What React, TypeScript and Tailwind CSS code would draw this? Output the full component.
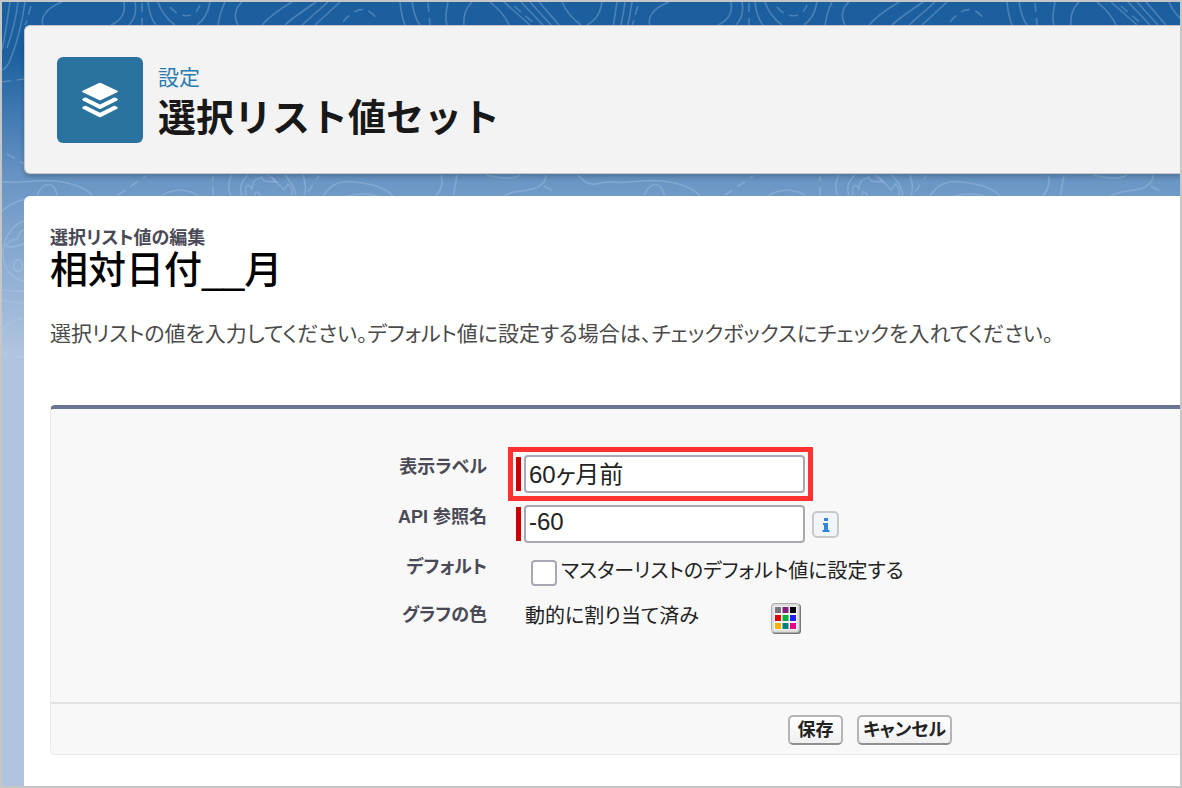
import { useState } from "react";
import type { ReactNode } from "react";

const CONTOURS = [
  // above the header
  "M10 2C7 20 6 32 2 50",
  "M18 2C16 18 12 34 7 48",
  "M25 2C22 24 18 40 11 58C8 66 5 69 2 70",
  "M62 2C46 8 40 18 43 25",
  "M124 2C126 14 120 21 111 25",
  "M135 2C137 12 134 20 129 25",
  "M148 2C149 12 151 19 156 25",
  "M158 2C162 14 168 20 175 25",
  "M210 2C208 14 204 20 197 25",
  "M225 2C220 12 219 19 218 25",
  "M242 2C234 9 234 18 238 25",
  "M292 2C280 9 268 18 262 25",
  "M316 2C300 13 291 19 285 25",
  "M328 2L302 25",
  "M340 2L315 25",
  "M400 2C401 12 402 18 405 25",
  "M412 2C414 14 416 20 420 25",
  "M448 2C446 12 445 18 447 25",
  "M472 2C466 8 463 16 464 25",
  "M490 2C500 10 506 18 509 25",
  "M504 2L530 25",
  "M521 2L543 25",
  "M530 2L551 25",
  "M539 2L559 25",
  "M562 2C567 14 574 20 581 25",
  "M602 2C600 14 596 20 587 25",
  // between the header and the content card
  "M2 182C20 184 35 179 55 181C75 183 90 190 94 198",
  "M36 198C42 182 54 178 58 198",
  "M160 197C170 188 190 188 200 197",
  "M232 175C227 184 228 190 232 198",
  "M248 175C238 184 240 192 243 198",
  "M246 196C244 183 250 183 252 190C252 183 255 179 258 179L262 177C262 183 270 181 276 182L268 175",
  "M272 177L284 190L288 184L292 188V197",
  "M255 198C254 190 260 190 260 198",
  "M285 175C292 184 296 188 296 198",
  "M303 175C307 186 305 192 304 198",
  "M322 198C330 184 340 180 355 182C375 184 390 190 394 198",
  "M345 197C356 193 370 193 380 197",
  "M441 175C444 184 440 192 434 198",
  "M457 175L453 198",
  "M486 175C500 179 514 179 520 175",
  "M546 175C546 186 535 190 520 191C510 193 505 194 502 198",
  "M578 175C585 184 592 186 600 183L610 182",
  // down the left edge
  "M2 211C9 205 17 201 26 199",
  "M28 220C14 222 4 236 3 252C2 268 12 280 28 282",
  "M25 230C18 230 20 237 16 240C12 239 8 242 6 246C12 248 20 246 25 243",
  "M18 259C12 262 12 270 18 272C24 270 24 262 18 259",
  "M2 290C10 291 18 292 26 291",
  "M2 301C10 301 18 302 26 304",
];

const DASHED = [
  "M31 6C28 14 28 20 25 25",
  "M142 3V25",
  "M170 7C180 19 195 19 200 5",
  "M343 22C355 7 368 4 379 22",
  "M428 3L430 25",
  "M514 6L536 25",
  "M2 82L24 79",
  "M7 154L26 165",
  "M118 195L146 176",
  "M213 196V176",
  "M308 192L319 176",
  "M544 186L556 193",
  "M2 330C8 322 15 319 25 318",
  "M2 350C6 358 14 359 25 356",
];

const SWATCHES = [
  "fill-[#777777]",
  "fill-[#802080]",
  "fill-black",
  "fill-[#e00000]",
  "fill-[#00b040]",
  "fill-[#2020ff]",
  "fill-[#ffb000]",
  "fill-[#008080]",
  "fill-[#e8008c]",
];

function TopoBackground() {
  return (
    <svg className="absolute inset-0 h-full w-full" aria-hidden="true">
      <defs>
        <g id="topo" fill="none" stroke="#b9d3ee" strokeOpacity="0.3" strokeWidth="1.6">
          {CONTOURS.map((d) => (
            <path key={d} d={d} />
          ))}
          {DASHED.map((d) => (
            <path key={d} d={d} strokeDasharray="9 6" />
          ))}
        </g>
      </defs>
      <g transform="translate(-2 -2)">
        <use href="#topo" />
        <use href="#topo" x="607" />
        <use href="#topo" x="1214" />
      </g>
    </svg>
  );
}

function LayersIcon() {
  return (
    <svg viewBox="0 0 36 36" className="h-9 w-9 fill-white" aria-hidden="true">
      <path d="M17 .9Q18 .4 19 .9L35.300 8.800Q36.500 9.500 35.300 10.200L19 18.100Q18 18.600 17 18.100L.7 10.200Q-.5 9.500 .7 8.800Z" />
      <path d="M1 16.500L2.600 15.700Q3.500 15.300 4.400 15.700L18 22.400L31.600 15.700Q32.500 15.300 33.400 15.700L35.200 16.600Q36.400 17.500 35.200 18.400L19 26.700Q18 27.200 17 26.700L.8 18.400Q-.4 17.500 1 16.500Z" />
      <path d="M1 24.800L2.600 24Q3.500 23.600 4.400 24L18 30.700L31.600 24Q32.500 23.600 33.400 24L35.200 24.900Q36.400 25.800 35.200 26.700L19 35Q18 35.500 17 35L.8 26.700Q-.4 25.800 1 24.800Z" />
    </svg>
  );
}

function PaletteIcon() {
  return (
    <svg viewBox="0 0 30 31" className="h-[31px] w-[30px]" aria-hidden="true">
      <rect x="1" y="1" width="29" height="30" rx="3" fill="#777" />
      <rect x=".5" y=".5" width="28" height="29" rx="3" fill="#ddd" stroke="#aaa" />
      <rect x="3" y="3" width="23" height="24" fill="#f5f5f5" />
      {SWATCHES.map((fill, i) => (
        <rect
          key={fill}
          x={4 + (i % 3) * 7.5}
          y={4 + Math.floor(i / 3) * 8}
          width="6"
          height="6"
          className={fill}
        />
      ))}
    </svg>
  );
}

function InfoIcon() {
  return (
    <svg viewBox="0 0 27 27" className="h-[27px] w-[27px]" aria-hidden="true">
      <rect x="1" y="1" width="25" height="25" rx="4" fill="#f1f4f8" stroke="#c9c9c9" strokeWidth="2" />
      <path d="M12 7h4v3h-4zM11 12h5v7h1.500v2h-7v-2h1.500v-5h-1z" fill="#2f86dc" />
    </svg>
  );
}

function Required({ highlighted = false, children }: { highlighted?: boolean; children: ReactNode }) {
  return (
    <div
      className={`flex h-[38px] gap-[3px] ${
        highlighted ? "outline-[5px] outline-offset-[3px] outline-[#ff3131]" : ""
      }`}
    >
      <span className="my-0.5 w-[5px] bg-[#c00]" />
      {children}
    </div>
  );
}

const labelClass = "text-right text-lg leading-6 font-bold text-[#4a4a56]";
const inputClass =
  "h-[38px] w-[281px] rounded-[4px] border-2 border-[#a9a8b5] bg-white px-[3px] pb-1 text-2xl text-[#222] outline-none";
const buttonClass =
  "h-[30px] min-w-[55px] rounded-[5px] border-2 border-[#b5b5b5] border-b-[#8f8f8f] bg-linear-to-b from-white to-[#f0f0f0] px-1 text-lg leading-6 font-bold text-[#222]";

export default function App() {
  const [label, setLabel] = useState("60ヶ月前");
  const [apiName, setApiName] = useState("-60");
  const [isDefault, setIsDefault] = useState(false);

  return (
    <div
      lang="ja"
      className="relative flex min-h-screen flex-col overflow-hidden border-2 border-[#c6c6c6] bg-[#b0c4df] bg-[linear-gradient(#1b5f9f_0px,#1b5f9f_50px,#6a96c5_180px,#b0c4df_350px)] font-['Liberation_Sans','Noto_Sans_CJK_JP',sans-serif] [font-feature-settings:'palt']"
    >
      <TopoBackground />

      <header className="relative mt-[23px] ml-[22px] flex h-[149px] items-center gap-[15px] rounded-l-[6px] border border-r-0 border-[#c9c7c5] bg-[#f3f3f3] pl-8 shadow-[0_3px_5px_rgba(0,0,0,0.2)]">
        <div className="flex h-[86px] w-[86px] items-center justify-center rounded-[6px] bg-[#2a739e]">
          <LayersIcon />
        </div>
        <div className="pt-2">
          <p className="text-[21px] leading-7 text-[#2a7bb0]">設定</p>
          <h1 className="text-[38px] leading-[52px] font-bold text-[#181818] [font-feature-settings:normal]">
            選択リスト値セット
          </h1>
        </div>
      </header>

      <main className="relative mt-[22px] ml-[22px] flex-1 rounded-tl-[6px] bg-white pt-[30px] pb-6 pl-[26px]">
        <p className="text-lg leading-6 font-bold text-[#4a4a56]">選択リスト値の編集</p>
        <h2 className="text-[38px] leading-10 font-medium text-black [font-feature-settings:normal]">
          相対日付__月
        </h2>
        <p className="mt-[28px] text-[21px] leading-8 whitespace-nowrap text-[#4a4a4a]">
          選択リストの値を入力してください。デフォルト値に設定する場合は、チェックボックスにチェックを入れてください。
        </p>

        <form
          className="mt-[55px] rounded-l-[5px] border-t-4 border-b border-l border-t-[#6a7391] border-b-[#eaeaea] border-l-[#eaeaea] bg-[#f8f8f8]"
          onSubmit={(e) => e.preventDefault()}
        >
          <div className="grid grid-cols-[436px_1fr] gap-x-[29px] gap-y-3 pt-[46px] pb-[69px]">
            <label htmlFor="label" className={labelClass}>
              表示ラベル
            </label>
            <div className="flex">
              <Required highlighted>
                <input
                  id="label"
                  className={inputClass}
                  value={label}
                  onChange={(e) => setLabel(e.target.value)}
                />
              </Required>
            </div>

            <label htmlFor="api-name" className={labelClass}>
              API 参照名
            </label>
            <div className="flex items-center gap-[7px]">
              <Required>
                <input
                  id="api-name"
                  className={inputClass}
                  value={apiName}
                  onChange={(e) => setApiName(e.target.value)}
                />
              </Required>
              <InfoIcon />
            </div>

            <span className={labelClass}>デフォルト</span>
            <div className="flex h-9 items-center gap-1 pl-[15px]">
              <input
                id="default"
                type="checkbox"
                className="h-[26px] w-[26px] appearance-none rounded-[4px] border-2 border-[#a9a8b5] bg-white checked:bg-[#2a739e]"
                checked={isDefault}
                onChange={(e) => setIsDefault(e.target.checked)}
              />
              <label htmlFor="default" className="pb-1 text-xl leading-7 text-[#222]">
                マスターリストのデフォルト値に設定する
              </label>
            </div>

            <span className={labelClass}>グラフの色</span>
            <div className="flex h-[30px] items-center pl-[9px]">
              <span className="w-[246px] pb-1 text-xl leading-7 text-[#222]">動的に割り当て済み</span>
              <button type="button" aria-label="色を選択">
                <PaletteIcon />
              </button>
            </div>
          </div>

          <div className="flex gap-[14px] border-t-2 border-[#e2e2e2] pt-[11px] pb-[9px] pl-[737px]">
            <button type="submit" className={buttonClass}>
              保存
            </button>
            <button type="button" className={buttonClass}>
              キャンセル
            </button>
          </div>
        </form>
      </main>
    </div>
  );
}
